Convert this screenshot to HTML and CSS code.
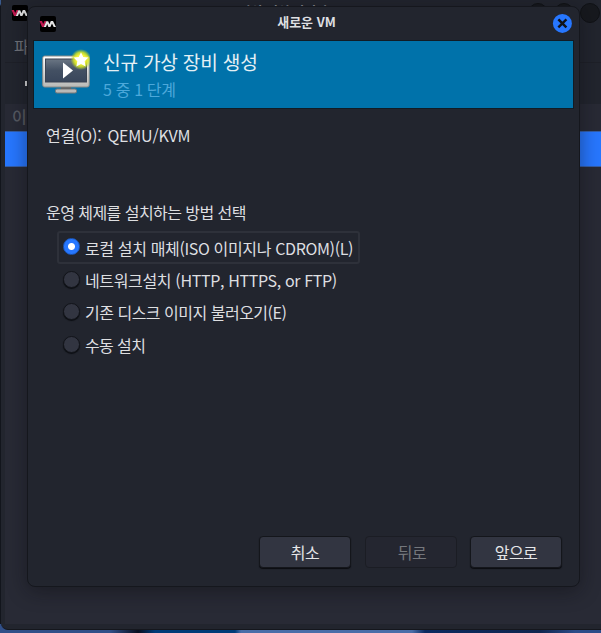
FILE: index.html
```html
<!DOCTYPE html>
<html lang="ko">
<head>
<meta charset="utf-8">
<title>새로운 VM</title>
<link rel="stylesheet" href="styles.css">
</head>
<body>
<svg width="0" height="0" class="defs">
  <symbol id="vm" viewBox="0 0 16 16" overflow="visible">
    <rect width="16" height="16" rx="2" fill="#000"/>
    <path d="M-.5 5H2l1.200 3L4.500 5H6.500L4 11H2z" fill="#c01850"/>
    <path d="M3.800 11 6.300 5.200H8.200L9.500 8.200 10.800 5H13L16 11H13.700L12 7.500 10.400 11H8.400L7.200 8 6 11z" fill="#e6e6e6"/>
  </symbol>
</svg>
<main class="manager">
  <header class="manager-title">
    <svg class="logo"><use href="#vm"/></svg>
    <span class="manager-name">가상 머신 관리자</span>
    <div class="controls"><i></i><i></i><i></i></div>
  </header>
  <nav class="menu">파일</nav>
  <div class="toolbar"><i></i></div>
  <section class="list">
    <div class="list-head">이름</div>
    <div class="list-row"></div>
  </section>
</main>
<section class="dialog">
  <header class="titlebar">
    <svg class="logo"><use href="#vm"/></svg>
    <span class="title">새로운 VM</span>
    <svg class="close" viewBox="0 0 20 20"><circle cx="10.400" cy="10.400" r="9.500" fill="#2777ff"/><path d="M7.200 7.200l6.400 6.400M13.600 7.200l-6.400 6.400" stroke="#10131b" stroke-width="2.400" stroke-linecap="square"/></svg>
  </header>
  <div class="banner">
    <svg class="monitor" viewBox="0 0 48 48">
      <defs>
        <linearGradient id="frame" x2="0" y2="1"><stop stop-color="#fff"/><stop offset="1" stop-color="#b9b9b6"/></linearGradient>
        <linearGradient id="screen" x2="0" y2="1"><stop stop-color="#6b7684"/><stop offset=".5" stop-color="#435063"/><stop offset="1" stop-color="#39465b"/></linearGradient>
        <radialGradient id="glow"><stop offset=".45" stop-color="#f4f43c"/><stop offset=".7" stop-color="#d5e522" stop-opacity=".85"/><stop offset="1" stop-color="#b5d52b" stop-opacity="0"/></radialGradient>
      </defs>
      <path d="M19 38h10v4H19z" fill="#555"/>
      <rect x="13.500" y="41" width="21" height="4" rx="1.500" fill="#b9b9b7" stroke="#777"/>
      <rect x=".7" y="8" width="46.500" height="31" rx="2" fill="url(#frame)" stroke="#8a8a87"/>
      <rect x="3.500" y="11" width="41" height="23" fill="url(#screen)" stroke="#3b4352"/>
      <path d="M21 14.500v16l10-8z" fill="#fff"/>
      <circle cx="39" cy="11.500" r="10.500" fill="url(#glow)"/>
      <path d="M39 4.200l2.300 4.700 5.100.7-3.700 3.700.9 5.100-4.600-2.500-4.600 2.500.9-5.100-3.700-3.700 5.100-.7z" fill="#fff"/>
    </svg>
    <div class="heading">
      <h1>신규 가상 장비 생성</h1>
      <p>5 중 1 단계</p>
    </div>
  </div>
  <div class="content">
    <div class="connection"><span>연결(O):</span><span class="value">QEMU/KVM</span></div>
    <p class="prompt">운영 체제를 설치하는 방법 선택</p>
    <div class="options">
      <label class="option focused"><i class="radio checked"></i><span class="iso">로컬 설치 매체(ISO 이미지나 CDROM)(L)</span></label>
      <label class="option"><i class="radio"></i><span class="network">네트워크설치 (HTTP, HTTPS, or FTP)</span></label>
      <label class="option"><i class="radio"></i><span class="import">기존 디스크 이미지 불러오기(E)</span></label>
      <label class="option"><i class="radio"></i><span class="manual">수동 설치</span></label>
    </div>
  </div>
  <footer class="actions">
    <button>취소</button>
    <button disabled>뒤로</button>
    <button>앞으로</button>
  </footer>
</section>
</body>
</html>
```

FILE: styles.css
```css
* { box-sizing: border-box; }
body {
  margin: 0;
  width: 601px;
  height: 633px;
  overflow: hidden;
  position: relative;
  background:
    linear-gradient(#39598c 0 4px, #12151c 6px) 0 0 / 1px 624px no-repeat,
    linear-gradient(90deg, #314f88 0 110px, #080e20 138px, #003b78 155px 235px, #4a6da8 241px 412px, #0b2a60 425px, #10264f 540px, #2c4c88 575px);
  font: 16px/24px "Noto Sans CJK KR", sans-serif;
  color: #dedfe1;
}
.defs { display: block; position: absolute; }
.manager {
  height: 630px;
  margin-left: 1px;
  padding: 0 0 5px 4px;
  background: #22252e;
  border-bottom: 1px solid #15171d;
  border-radius: 0 0 0 7px;
  display: flex;
  flex-direction: column;
  overflow: hidden;
}
.logo { width: 16px; height: 16px; display: block; flex: none; overflow: visible; }
.manager-title { height: 32px; flex: none; display: flex; align-items: flex-start; padding: 5px 0 0 7px; }
.manager-name { width: 525px; flex: none; margin: -4px 0 0 -7px; text-align: center; font-size: 13px; font-weight: 700; line-height: 20px; letter-spacing: -.3px; color: #888a90; }
.controls { display: flex; flex: none; gap: 6px; margin: -2px 0 0 -18px; }
.controls i { width: 20px; height: 20px; border-radius: 50%; background: #17191e; border: 1px solid #101216; }
.menu { height: 30px; flex: none; padding: 2px 0 0 9px; color: #70737a; }
.toolbar { height: 42px; flex: none; border-top: 1px solid #1e2028; padding: 18px 0 0 20px; }
.toolbar i { display: block; width: 5px; height: 5px; background: #d8d8da; }
.list { flex: 1; background: #282a35; }
.list-head { height: 27px; padding-left: 7px; line-height: 24px; color: #565961; font-weight: 500; }
.list-row { height: 36px; background: #2777ff; border: 1px solid #345da6; border-width: 1px 0; }
.dialog {
  position: absolute;
  left: 27px;
  top: 6px;
  width: 553px;
  height: 581px;
  border: 1px solid #15171d;
  border-radius: 8px;
  background: #22252e;
  box-shadow: 0 4px 20px rgba(10, 12, 16, .45);
  display: flex;
  flex-direction: column;
}
.titlebar { height: 33px; flex: none; display: flex; align-items: flex-start; justify-content: space-between; padding: 9px 7px 0 12px; }
.title { font-size: 13px; font-weight: 700; line-height: 16px; margin: -2px 0 0 5px; }
.close { width: 20px; height: 20px; margin-top: -3px; }
.banner { height: 69px; flex: none; margin: 0 5px; border: 1px solid #111c25; background: #0072aa; display: flex; padding: 7px 0 0 8px; }
.monitor { width: 48px; height: 48px; flex: none; }
.heading { padding-left: 13px; }
h1 { margin: 0; font-size: 19.200px; font-weight: 400; line-height: 28px; letter-spacing: -.25px; color: #e5f0f5; }
.heading p { margin: 0; line-height: 26px; letter-spacing: -.35px; color: #4ca8da; }
.content { flex: 1; padding: 14px 18px 0; }
.connection { display: flex; gap: 6px; height: 24px; letter-spacing: -.2px; }
.prompt { margin: 53px 0 7px; letter-spacing: -.55px; }
.options { margin-left: 11px; display: flex; flex-direction: column; }
.option { display: flex; align-items: center; gap: 5px; height: 32.600px; padding: 0 5px; border: 1px solid transparent; width: max-content; }
.option.focused { height: 33px; width: 303px; border: 2px solid #2e313a; border-radius: 3px; padding: 0 4px; }
.option span { margin-top: -1px; white-space: nowrap; }
.option .iso { letter-spacing: -.36px; margin-top: 1px; }
.network { letter-spacing: -.35px; }
.import { letter-spacing: -.5px; }
.manual { letter-spacing: -.6px; }
.radio { width: 17px; height: 17px; flex: none; border-radius: 50%; border: 1px solid #12141a; background: #323541; box-shadow: 0 1px 1px #0b0d11; margin-top: -2px; }
.radio.checked { background: radial-gradient(circle, #fff 0 3px, #2777ff 4px); border-color: #1b58bd; box-shadow: none; }
.actions { display: flex; gap: 13px; justify-content: flex-end; height: 50px; padding-right: 17px; flex: none; }
button { width: 92px; height: 32px; padding: 0; border: 1px solid #14161b; border-radius: 4px; background: #323541; color: #e5e6e8; font: inherit; letter-spacing: -.5px; box-shadow: 0 1px 1px #0b0c10; }
button:first-child { margin-right: 1px; }
button:disabled { color: #74777c; background: #242630; border-color: #1b1d24; box-shadow: none; padding-left: 2px; }
```
